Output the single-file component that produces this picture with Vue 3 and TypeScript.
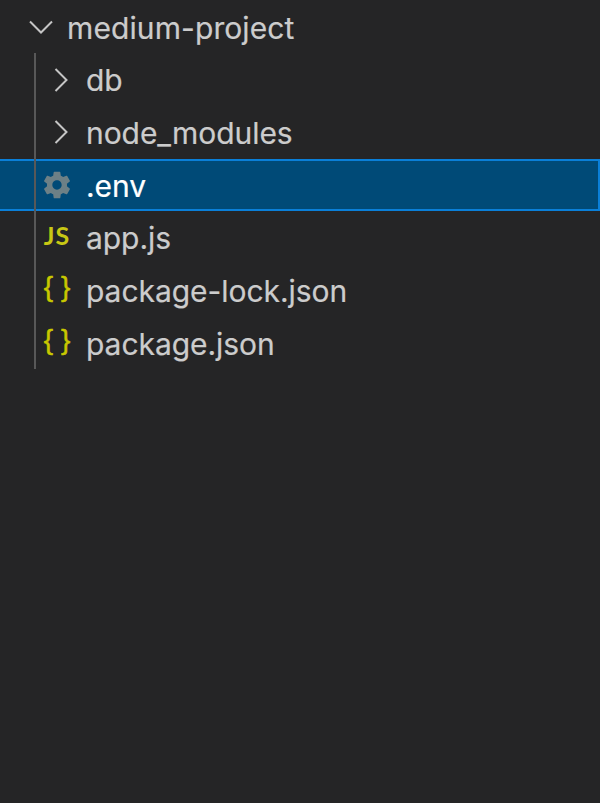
<script setup lang="ts">
interface Row {
  name: string;
  kind: 'folder' | 'gear' | 'js' | 'json';
  active?: boolean;
}
const rows: Row[] = [
  { name: 'db', kind: 'folder' },
  { name: 'node_modules', kind: 'folder' },
  { name: '.env', kind: 'gear', active: true },
  { name: 'app.js', kind: 'js' },
  { name: 'package-lock.json', kind: 'json' },
  { name: 'package.json', kind: 'json' },
];
</script>

<template>
  <div class="explorer">
    <div class="header">
      <svg class="twistie-open" width="24" height="14" viewBox="0 0 24 14">
        <path d="M1 1.5 L12 12.5 L23 1.5" fill="none" stroke="#c5c5c5" stroke-width="2" />
      </svg>
      <span class="label">medium-project</span>
    </div>
    <div class="tree">
      <div class="guide"></div>
      <div v-for="row in rows" :key="row.name" class="row" :class="{ active: row.active }">
        <div class="icon">
          <svg v-if="row.kind === 'folder'" class="chevron" width="14" height="24" viewBox="0 0 14 24">
            <path d="M1.5 1 L12.5 12 L1.5 23" fill="none" stroke="#c5c5c5" stroke-width="2" />
          </svg>
          <svg v-else-if="row.kind === 'gear'" width="32" height="32" viewBox="0 0 24 24">
            <path
              fill="#6d8086"
              fill-rule="evenodd"
              d="M19.43 12.98c.04-.32.07-.64.07-.98s-.03-.66-.07-.98l2.11-1.65c.19-.15.24-.42.12-.64l-2-3.46c-.12-.22-.39-.3-.61-.22l-2.49 1c-.52-.4-1.08-.73-1.69-.98l-.38-2.65C14.46 2.18 14.25 2 14 2h-4c-.25 0-.46.18-.49.42l-.38 2.65c-.61.25-1.17.59-1.69.98l-2.49-1c-.23-.09-.49 0-.61.22l-2 3.46c-.13.22-.07.49.12.64l2.11 1.65c-.04.32-.07.65-.07.98s.03.66.07.98l-2.11 1.65c-.19.15-.24.42-.12.64l2 3.46c.12.22.39.3.61.22l2.49-1c.52.4 1.08.73 1.69.98l.38 2.65c.03.24.24.42.49.42h4c.25 0 .46-.18.49-.42l.38-2.65c.61-.25 1.17-.59 1.69-.98l2.49 1c.23.09.49 0 .61-.22l2-3.46c.12-.22.07-.49-.12-.64l-2.11-1.65zM12 15.5c-1.93 0-3.5-1.57-3.5-3.5s1.57-3.5 3.5-3.5 3.5 1.57 3.5 3.5-1.57 3.5-3.5 3.5z"
            />
          </svg>
          <span v-else-if="row.kind === 'js'" class="js">JS</span>
          <span v-else class="braces">{ }</span>
        </div>
        <span class="label">{{ row.name }}</span>
      </div>
    </div>
  </div>
</template>

<style scoped>
.explorer {
  width: 600px;
  height: 803px;
  background: #252526;
  color: #cccccc;
  font-family: Inter, "Liberation Sans", sans-serif;
  font-size: 30px;
  overflow: hidden;
  padding-top: 1.4px;
  box-sizing: border-box;
}
.header {
  height: 52px;
  display: flex;
  align-items: center;
  padding-left: 29px;
}
.header .label {
  position: relative;
  top: 1px;
  letter-spacing: 0.1px;
}
.twistie-open {
  margin-right: 14px;
}
.label {
  white-space: nowrap;
  line-height: 1;
  letter-spacing: -0.05px;
  -webkit-text-stroke: 0.2px currentColor;
}
.row .label {
  padding-top: 1px;
}
.tree {
  position: relative;
}
.guide {
  position: absolute;
  left: 34px;
  top: 0;
  bottom: 0;
  width: 2px;
  background: #585858;
  z-index: 1;
}
.row {
  height: 52.67px;
  box-sizing: border-box;
  display: flex;
  align-items: center;
  padding-left: 40px;
}
.row.active {
  background: #004a77;
  border: 2px solid #0a7fd8;
  border-left-width: 0;
  color: #ffffff;
}
.icon {
  width: 46px;
  height: 30px;
  flex: none;
  display: flex;
  align-items: center;
  justify-content: center;
  padding-right: 12px;
  box-sizing: border-box;
}
.chevron {
  margin-left: 7px;
}
.js {
  color: #c8c814;
  font-family: Lato, sans-serif;
  font-weight: 700;
  font-size: 25px;
  letter-spacing: 1px;
  position: relative;
  top: -3px;
}
.braces {
  color: #c8c800;
  font-family: "Liberation Sans", sans-serif;
  font-size: 28px;
  -webkit-text-stroke: 0.5px #c8c800;
  white-space: pre;
  position: relative;
  top: -3px;
}
</style>
